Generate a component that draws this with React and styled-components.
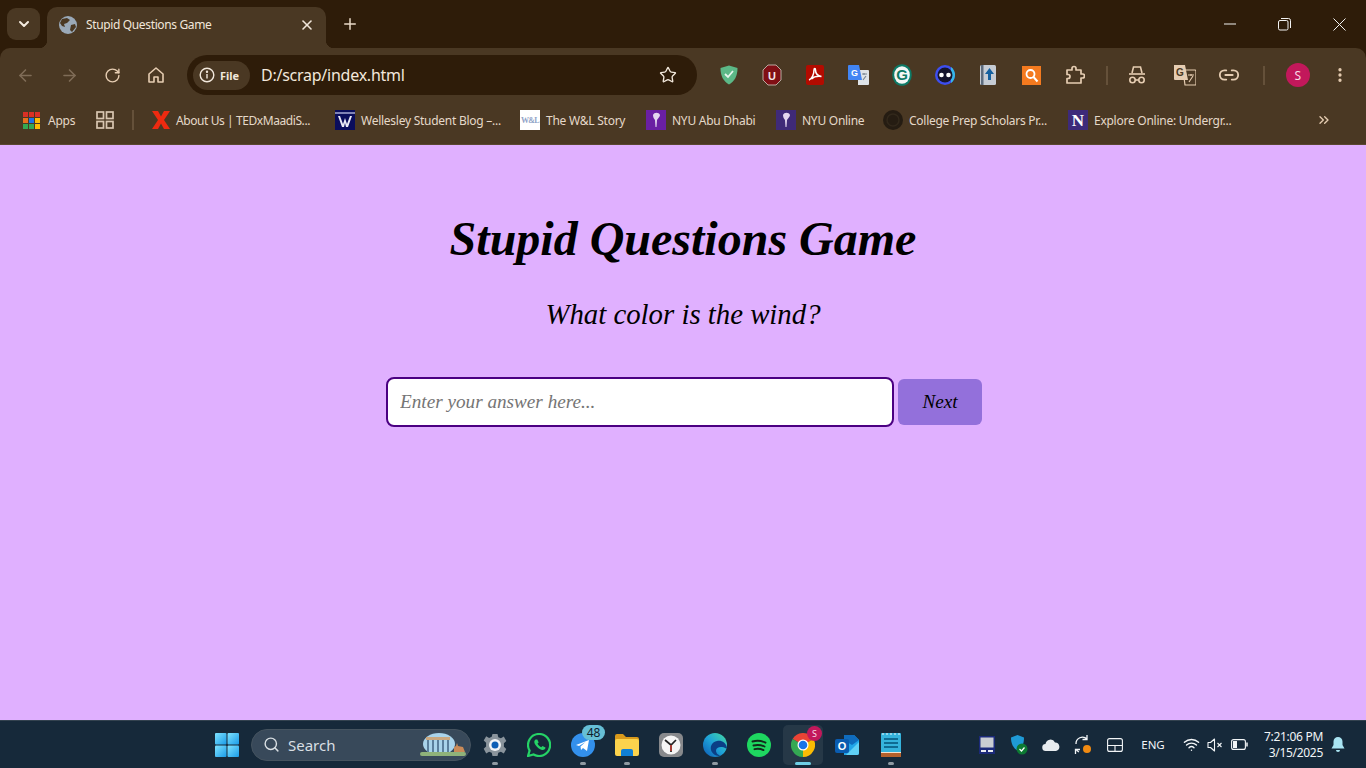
import React from "react"
import styled, { createGlobalStyle } from "styled-components"
import { ArrowLeft, ArrowRight, RotateCw, Star, Link2, MoreVertical, X, Plus, ChevronDown, ChevronsRight, Search, Wifi } from "lucide-react"

const GlobalStyle = createGlobalStyle`
    html, body {
        margin: 0;
        padding: 0;
        overflow: hidden;
    }
    * {
        box-sizing: border-box;
    }
`

const chromeFont = `"Noto Sans", "Open Sans", sans-serif`
const dark = "#2e1c09"
const frame = "#4a3823"
const tint = "#e6cdb2"

const Page = styled.div`
    width: 1366px;
    height: 768px;
    display: flex;
    flex-direction: column;
    background: ${dark};
    font-family: ${chromeFont};
`

/* tab strip */
const TabStrip = styled.div`
    height: 48px;
    flex: none;
    display: flex;
    align-items: flex-end;
    padding-left: 7px;
`
const TabSwitcher = styled.div`
    width: 33px;
    height: 32px;
    margin-bottom: 8px;
    background: ${frame};
    border-radius: 9px;
    color: #f4eadf;
    display: flex;
    align-items: center;
    justify-content: center;
`
const Tab = styled.div`
    position: relative;
    width: 279px;
    height: 41px;
    margin-left: 7px;
    padding: 0 11px 6px 12px;
    background: ${frame};
    border-radius: 10px 10px 0 0;
    display: flex;
    align-items: center;
    gap: 9px;
    color: #f1e6da;
    &::before,
    &::after {
        content: "";
        position: absolute;
        bottom: 0;
        width: 8px;
        height: 8px;
    }
    &::before {
        left: -8px;
        background: radial-gradient(circle at 0 0, transparent 8px, ${frame} 8.5px);
    }
    &::after {
        right: -8px;
        background: radial-gradient(circle at 100% 0, transparent 8px, ${frame} 8.5px);
    }
`
const TabTitle = styled.span`
    flex: 1;
    font-size: 12px;
    letter-spacing: -0.36px;
    white-space: nowrap;
`
const NewTab = styled.div`
    width: 24px;
    height: 24px;
    margin: 0 0 12px 12px;
    color: #e9d9c7;
    display: flex;
    align-items: center;
    justify-content: center;
`
const WindowControls = styled.div`
    margin-left: auto;
    margin-right: -1px;
    align-self: stretch;
    display: flex;
`
const WindowButton = styled.div`
    width: 55px;
    height: 48px;
    color: #f2f2f2;
    display: flex;
    align-items: center;
    justify-content: center;
`

/* toolbar */
const Toolbar = styled.div`
    height: 54px;
    flex: none;
    background: ${frame};
    border-radius: 10px 10px 0 0;
    display: flex;
    align-items: center;
    padding-left: 4px;
`
const NavButton = styled.div`
    width: 43.5px;
    height: 36px;
    flex: none;
    color: ${p => (p.$off ? "#7f6c57" : tint)};
    display: flex;
    align-items: center;
    justify-content: center;
`
const Omnibox = styled.div`
    width: 510px;
    height: 40px;
    margin-left: 9px;
    margin-right: 9px;
    padding: 0 20px 0 6px;
    flex: none;
    background: ${dark};
    border-radius: 20px;
    display: flex;
    align-items: center;
    color: #f2e8dc;
`
const SiteChip = styled.div`
    width: 57px;
    height: 29px;
    padding-left: 6px;
    background: ${frame};
    border-radius: 15px;
    display: flex;
    align-items: center;
    gap: 5px;
    font-size: 11px;
    font-weight: 700;
    color: #f2e8dc;
`
const Url = styled.span`
    flex: 1;
    margin-left: 11px;
    font-size: 16px;
    letter-spacing: -0.25px;
`
const ExtensionRow = styled.div`
    display: flex;
    align-items: center;
    padding-left: 1px;
`
const ExtensionSlot = styled.div`
    width: ${p => p.$w || 43.3}px;
    height: 36px;
    flex: none;
    color: ${tint};
    display: flex;
    align-items: center;
    justify-content: center;
`
const ToolbarRule = styled.div`
    width: 2px;
    height: 19px;
    flex: none;
    margin: 0 ${p => p.$gap || 13}px;
    background: #65513a;
`
const Avatar = styled.div`
    width: 24px;
    height: 24px;
    flex: none;
    margin-left: 3px;
    border-radius: 50%;
    background: #c2185b;
    color: #f8dbe6;
    font-size: 12px;
    display: flex;
    align-items: center;
    justify-content: center;
`

/* bookmarks */
const BookmarkBar = styled.div`
    height: 43px;
    flex: none;
    padding: 0 0 6px 23px;
    background: ${frame};
    border-bottom: 1px solid #5a4731;
    display: flex;
    align-items: center;
    color: #e5d8c9;
    font-size: 12px;
`
const Bookmark = styled.div`
    width: ${p => p.$w}px;
    flex: none;
    display: flex;
    align-items: center;
    gap: ${p => p.$gap || 6}px;
    white-space: nowrap;
`
const BookmarkText = styled.span`
    letter-spacing: ${p => p.$track || -0.26}px;
`
const BarRule = styled.div`
    width: 2px;
    height: 20px;
    flex: none;
    margin-right: 18px;
    background: #65513a;
`
const Overflow = styled.div`
    margin-left: auto;
    margin-right: 34px;
    color: ${tint};
    display: flex;
`

/* the page itself */
const Main = styled.main`
    flex: 1;
    background: #e0b0ff;
    color: #000;
    font-family: "Liberation Serif", "Times New Roman", serif;
    font-style: italic;
    display: flex;
    flex-direction: column;
    align-items: center;
    padding-top: 66px;
`
const Title = styled.h1`
    margin: 0;
    font-size: 48px;
    line-height: 55px;
    font-weight: 700;
`
const Question = styled.p`
    margin: 32px 0 0;
    font-size: 28.8px;
    line-height: 33px;
`
const AnswerForm = styled.form`
    margin: 46px 0 0 2px;
    display: flex;
    align-items: center;
    gap: 4px;
`
const AnswerInput = styled.input`
    width: 508px;
    height: 50px;
    padding: 0 12px;
    background: #fff;
    border: 2px solid #4b0082;
    border-radius: 8px;
    outline: none;
    font: italic 19.2px "Liberation Serif", "Times New Roman", serif;
    color: #000;
    &::placeholder {
        color: #757575;
        opacity: 1;
    }
`
const NextButton = styled.button`
    width: 84px;
    height: 46px;
    padding: 0;
    background: #9370db;
    border: none;
    border-radius: 6px;
    font: italic 19.2px "Liberation Serif", "Times New Roman", serif;
    color: #000;
`

/* taskbar */
const Taskbar = styled.footer`
    height: 48px;
    flex: none;
    padding-left: 205px;
    background: #16293a;
    border-top: 1px solid #33424f;
    display: flex;
    align-items: center;
    color: #f2f5f7;
`
const TaskButton = styled.div`
    position: relative;
    width: ${p => (p.$active ? 40 : 44)}px;
    height: 40px;
    flex: none;
    margin: 0 ${p => (p.$active ? 2 : 0)}px;
    border-radius: 5px;
    background: ${p => (p.$active ? "#263847" : "transparent")};
    display: flex;
    align-items: center;
    justify-content: center;
`
const RunDot = styled.span`
    position: absolute;
    left: 50%;
    bottom: 0;
    width: ${p => (p.$active ? 16 : 6)}px;
    height: 3px;
    margin-left: ${p => (p.$active ? -8 : -3)}px;
    border-radius: 2px;
    background: ${p => (p.$active ? "#6fcfe6" : "#8f9aa3")};
`
const CountBadge = styled.span`
    position: absolute;
    top: 0;
    right: 0;
    width: 23px;
    height: 15px;
    border-radius: 8px;
    background: #66bfd6;
    color: #10202c;
    font-size: 12px;
    line-height: 15px;
    text-align: center;
`
const ChromeBadge = styled.span`
    position: absolute;
    top: 1px;
    right: 1px;
    width: 15px;
    height: 15px;
    border-radius: 50%;
    background: #c2185b;
    color: #f8dbe6;
    font-size: 9px;
    line-height: 15px;
    text-align: center;
`
const SearchBox = styled.div`
    width: 220px;
    height: 32px;
    flex: none;
    margin: 0 2px 0 2px;
    padding: 0 3px 0 11px;
    background: #38495a;
    border: 1px solid #45535f;
    border-radius: 16px;
    display: flex;
    align-items: center;
    gap: 8px;
    font-size: 15px;
    color: #d9dfe3;
`
const SearchLabel = styled.span`
    flex: 1;
`
const Tray = styled.div`
    margin-left: auto;
    padding-right: 21px;
    display: flex;
    align-items: center;
`
const TraySlot = styled.div`
    width: ${p => p.$w || 32}px;
    flex: none;
    display: flex;
    align-items: center;
    justify-content: center;
    font-size: 11.5px;
`
const ClockText = styled.div`
    width: 68px;
    flex: none;
    margin-right: 8px;
    text-align: right;
    font-size: 12px;
    line-height: 16px;
    letter-spacing: -0.3px;
    white-space: nowrap;
`

function GlobeIcon() {
    return (
        <svg width="18" height="18" viewBox="0 0 18 18">
            <circle cx="9" cy="9" r="9" fill="#9aa9b8" />
            <path d="M3 3 8 2 11 4 8 7 5 8 6 11 3 10 1 7ZM12 9 16 8 17 11 13 16 11 14Z" fill="#4a3823" />
        </svg>
    )
}

function HomeIcon() {
    return (
        <svg width="18" height="18" viewBox="0 0 18 18" fill="none" stroke="#e6cdb2" strokeWidth="1.6">
            <path d="M2 8 9 2l7 6v8h-5v-5H7v5H2Z" strokeLinejoin="round" />
        </svg>
    )
}

function InfoIcon() {
    return (
        <svg width="16" height="16" viewBox="0 0 16 16" fill="none" stroke="#f2e8dc" strokeWidth="1.4">
            <circle cx="8" cy="8" r="6.8" />
            <path d="M8 7v4.5" />
            <circle cx="8" cy="4.8" r=".5" fill="#f2e8dc" />
        </svg>
    )
}

function ShieldExt() {
    return (
        <svg width="20" height="20" viewBox="0 0 20 20">
            <path d="M1.5 3 10 .5 18.5 3c0 8-3 13.500-8.500 16.500C4.500 16.500 1.500 11 1.500 3Z" fill="#5cb887" />
            <path d="m6 9 3 3 5-6" fill="none" stroke="#e6f5ec" strokeWidth="1.8" />
        </svg>
    )
}

function StopExt() {
    return (
        <svg width="20" height="22" viewBox="0 0 20 22">
            <path d="M6 1h8l5 5v10l-5 5H6l-5-5V6Z" fill="#800f14" stroke="#b9a9a0" strokeWidth="1" />
            <text x="10" y="15.500" textAnchor="middle" fontSize="11" fontWeight="700" fill="#f3e6e6" fontFamily="Liberation Sans">U</text>
        </svg>
    )
}

function PdfExt() {
    return (
        <svg width="18" height="20" viewBox="0 0 18 20">
            <rect width="18" height="20" rx="2" fill="#b30b00" />
            <path d="M3 15c3-1 5-6 5-10 0-2 1.500-2 1.500 0 0 4 3 6 6 6.500-4-.5-8 .5-10 2.500" fill="none" stroke="#fff" strokeWidth="1.500" />
        </svg>
    )
}

function TranslateExt() {
    return (
        <svg width="21" height="20" viewBox="0 0 21 20">
            <path d="M10 5h10a1 1 0 0 1 1 1v13a1 1 0 0 1-1 1H10Z" fill="#dfe3e8" />
            <path d="M14 9h5M16 8v2M15 15l3-4" stroke="#7b8794" strokeWidth="1.200" fill="none" />
            <path d="M1 0h10l3 15H1a1 1 0 0 1-1-1V1a1 1 0 0 1 1-1Z" fill="#4285f4" />
            <text x="6.500" y="11" textAnchor="middle" fontSize="9" fontWeight="700" fill="#fff" fontFamily="Liberation Sans">G</text>
        </svg>
    )
}

function GrammarExt() {
    return (
        <svg width="20" height="22" viewBox="0 0 20 22">
            <ellipse cx="10" cy="11" rx="9.800" ry="10.800" fill="#0d7a66" />
            <ellipse cx="10" cy="11" rx="7.800" ry="8.800" fill="#f3f7f6" />
            <text x="10" y="16" textAnchor="middle" fontSize="15" fontWeight="700" fill="#0d7a66" fontFamily="Liberation Sans">G</text>
        </svg>
    )
}

function EyesExt() {
    return (
        <svg width="20" height="20" viewBox="0 0 20 20">
            <circle cx="10" cy="10" r="10" fill="#3d4ef0" />
            <path d="M16 2a10 10 0 0 1 0 16Z" fill="#35b7e8" />
            <circle cx="10" cy="10" r="7.500" fill="#15152e" />
            <circle cx="6.500" cy="10" r="2.300" fill="#fff" />
            <circle cx="13.500" cy="10" r="2.300" fill="#fff" />
        </svg>
    )
}

function BookExt() {
    return (
        <svg width="16" height="20" viewBox="0 0 16 20">
            <rect width="16" height="20" rx="1.500" fill="#c6ccd4" />
            <rect x="1" width="2.500" height="20" fill="#5c6b7d" />
            <path d="M9.500 3 14 9h-3v6H8V9H5Z" fill="#14609f" />
        </svg>
    )
}

function SearchExt() {
    return (
        <svg width="19" height="19" viewBox="0 0 19 19">
            <rect width="19" height="19" fill="#f47a1f" />
            <circle cx="8.500" cy="8" r="4" fill="none" stroke="#fff" strokeWidth="1.800" />
            <path d="m11.500 11 4 4.500" stroke="#fff" strokeWidth="2" />
        </svg>
    )
}

function PuzzleIcon() {
    return (
        <svg width="20" height="20" viewBox="0 0 20 20" fill="none" stroke="#e6cdb2" strokeWidth="1.700" strokeLinejoin="round">
            <path d="M2 5h5V3.500a2 2 0 0 1 4 0V5h5v4h1.500a2 2 0 0 1 0 4H16v5H2v-4.500h1a2 2 0 0 0 0-4H2Z" />
        </svg>
    )
}

function IncognitoIcon() {
    return (
        <svg width="20" height="20" viewBox="0 0 20 20" fill="none" stroke="#e6cdb2" strokeWidth="1.600">
            <path d="M5 8 6.500 2h7L15 8" />
            <path d="M2 9h16" />
            <circle cx="5.500" cy="15" r="2.700" />
            <circle cx="14.500" cy="15" r="2.700" />
            <path d="M8.200 15h3.600" />
        </svg>
    )
}

function TranslateIcon() {
    return (
        <svg width="22" height="22" viewBox="0 0 22 22">
            <path d="M0 1h11l3 15H1a1 1 0 0 1-1-1Z" fill="#e6cdb2" />
            <path d="M9 6h12a1 1 0 0 1 1 1v14H11Z" fill="none" stroke="#e6cdb2" strokeWidth="1.200" />
            <text x="6" y="12" textAnchor="middle" fontSize="10" fontWeight="700" fill="#4a3823" fontFamily="Liberation Sans">G</text>
            <path d="M14 11h6M17 10v2M15 18l4-6" stroke="#e6cdb2" strokeWidth="1.100" fill="none" />
        </svg>
    )
}

function AppsIcon() {
    const colours = ["#d93025", "#d93025", "#d93025", "#e8711c", "#1a73e8", "#fbbc04", "#34a853", "#34a853", "#fbbc04"]
    return (
        <svg width="17" height="17" viewBox="0 0 17 17">
            {colours.map((fill, i) => (
                <rect key={i} x={(i % 3) * 6} y={Math.floor(i / 3) * 6} width="5" height="5" fill={fill} />
            ))}
        </svg>
    )
}

function GridIcon() {
    return (
        <svg width="18" height="18" viewBox="0 0 18 18" fill="none" stroke="#d9c6b1" strokeWidth="1.700">
            <rect x="1" y="1" width="6.500" height="6.500" />
            <rect x="10.500" y="1" width="6.500" height="6.500" />
            <rect x="1" y="10.500" width="6.500" height="6.500" />
            <rect x="10.500" y="10.500" width="6.500" height="6.500" />
        </svg>
    )
}

function TedxIcon() {
    return (
        <svg width="18" height="18" viewBox="0 0 18 18">
            <path d="M0 0h6l3 5.500L12 0h6l-6 9 6 9h-6l-3-5.500L6 18H0l6-9Z" fill="#ee2a10" />
        </svg>
    )
}

function WellesleyIcon() {
    return (
        <svg width="20" height="20" viewBox="0 0 20 20">
            <rect width="20" height="20" fill="#0a0d5c" />
            <rect y="2" width="20" height="2" fill="#7f82b5" />
            <path d="M3 6h2l3 8 2-6 2 6 3-8h2l-4 11h-2l-1-4-1 4H7Z" fill="#e9e9f4" />
        </svg>
    )
}

function WlIcon() {
    return (
        <svg width="20" height="20" viewBox="0 0 20 20">
            <rect width="20" height="20" fill="#fff" />
            <text x="10" y="13" textAnchor="middle" fontSize="8" fontWeight="700" fill="#8fa3c7" fontFamily="Liberation Serif" letterSpacing="-.6">W&amp;L</text>
        </svg>
    )
}

function TorchIcon({ bg }) {
    return (
        <svg width="20" height="20" viewBox="0 0 20 20">
            <rect width="20" height="20" fill={bg} />
            <path d="M7 5c1-3 6-3 7 0 0 2-2 3-3 5l-.5 7h-1L9 10C8 9 7 7 7 5Z" fill="#e4d6ef" />
        </svg>
    )
}

function SealIcon() {
    return (
        <svg width="20" height="20" viewBox="0 0 20 20">
            <circle cx="10" cy="10" r="10" fill="#251c12" />
            <circle cx="10" cy="10" r="6" fill="none" stroke="#32281b" strokeWidth="1.500" />
        </svg>
    )
}

function NorthwesternIcon() {
    return (
        <svg width="20" height="20" viewBox="0 0 20 20">
            <rect width="20" height="20" fill="#3d2a7a" />
            <text x="10" y="16" textAnchor="middle" fontSize="17" fontWeight="700" fill="#fff" fontFamily="Liberation Serif">N</text>
        </svg>
    )
}

function WindowsIcon() {
    return (
        <svg width="24" height="24" viewBox="0 0 24 24">
            <defs>
                <linearGradient id="winBlue" x1="0" y1="0" x2="1" y2="1">
                    <stop offset="0" stopColor="#7fe3ff" />
                    <stop offset="1" stopColor="#1a9be8" />
                </linearGradient>
            </defs>
            <rect x="0" y="0" width="11.500" height="11.500" rx="1" fill="url(#winBlue)" />
            <rect x="12.500" y="0" width="11.500" height="11.500" rx="1" fill="url(#winBlue)" />
            <rect x="0" y="12.500" width="11.500" height="11.500" rx="1" fill="url(#winBlue)" />
            <rect x="12.500" y="12.500" width="11.500" height="11.500" rx="1" fill="url(#winBlue)" />
        </svg>
    )
}

function RuinsThumb() {
    return (
        <svg width="48" height="26" viewBox="0 0 48 26">
            <ellipse cx="20" cy="12" rx="16" ry="11" fill="#a9d3ea" />
            <rect x="1" y="20" width="46" height="4" rx="2" fill="#8fb27a" />
            <path d="M7 5h24v3H7Z" fill="#c9a77f" />
            <path d="M8 8h2v12H8ZM13 8h2v12h-2ZM18 8h2v12h-2ZM23 8h2v12h-2ZM28 8h2v12h-2Z" fill="#5b7f9c" />
            <path d="M35 20v-5l2-1 1-3 1 3 5 1 2 5Z" fill="#c98a58" />
        </svg>
    )
}

function GearIcon() {
    return (
        <svg width="24" height="24" viewBox="0 0 24 24">
            <path d="M9.500 1h5l.8 3.200 2.600 1.100 2.900-1.700 2.500 4.300-2.400 2.300v3.600l2.400 2.300-2.500 4.300-2.900-1.700-2.600 1.100-.8 3.200h-5l-.8-3.200-2.600-1.100-2.900 1.700L.7 15.700l2.400-2.300v-3.600L.7 7.500l2.500-4.300 2.900 1.700 2.600-1.100Z" fill="#8a949c" />
            <circle cx="12" cy="12" r="6" fill="#f2f4f6" />
            <circle cx="12" cy="12" r="3.500" fill="#0f5fb5" />
        </svg>
    )
}

function WhatsappIcon() {
    return (
        <svg width="24" height="24" viewBox="0 0 24 24">
            <path d="M12 1a11 11 0 0 0-9.400 16.600L1 23l5.600-1.500A11 11 0 1 0 12 1Z" fill="none" stroke="#25d366" strokeWidth="2.200" />
            <path d="M8.500 6.500c-1.500 1-1.800 3 0 5.500s4 4.500 6.500 5c2 .3 3.500-1 3.500-2.500l-3-1.500-1.300 1.300c-1.500-.6-3-2-3.700-3.700l1.200-1.200-1.400-3Z" fill="#25d366" />
        </svg>
    )
}

function TelegramIcon() {
    return (
        <svg width="24" height="24" viewBox="0 0 24 24">
            <circle cx="12" cy="12" r="12" fill="#3390ec" />
            <path d="m5 12 13-5-2 11-4-3-2 2-.5-3.500 5-4.500-6.500 4Z" fill="#fff" />
        </svg>
    )
}

function FolderIcon() {
    return (
        <svg width="24" height="22" viewBox="0 0 24 22">
            <path d="M0 2a2 2 0 0 1 2-2h6l3 3h11a2 2 0 0 1 2 2v3H0Z" fill="#d99a1c" />
            <rect y="5" width="24" height="17" rx="2" fill="#fcd34d" />
            <path d="M8 15h8a2 2 0 0 1 2 2v5H6v-5a2 2 0 0 1 2-2Z" fill="#0f7fd6" />
        </svg>
    )
}

function ClockAppIcon() {
    return (
        <svg width="24" height="24" viewBox="0 0 24 24">
            <rect width="24" height="24" rx="5" fill="#87898c" />
            <circle cx="12" cy="12" r="9.500" fill="#f5f5f5" />
            <path d="M6 7l6 5 5-5M12 12v7" stroke="#222" strokeWidth="1.700" fill="none" />
            <path d="M12 12v6" stroke="#d13b2e" strokeWidth="1.400" />
        </svg>
    )
}

function EdgeIcon() {
    return (
        <svg width="24" height="24" viewBox="0 0 24 24">
            <defs>
                <linearGradient id="edgeSwirl" x1="1" y1="0" x2="0" y2="1">
                    <stop offset="0" stopColor="#45dba0" />
                    <stop offset=".5" stopColor="#1fa3d8" />
                    <stop offset="1" stopColor="#0c59b4" />
                </linearGradient>
            </defs>
            <circle cx="12" cy="12" r="12" fill="url(#edgeSwirl)" />
            <path d="M24 15c-1-6-6-8-10-7-5 1-7 5-6 9s6 7 10 5.500c-3 0-5-2.500-5-5s3-4 6-3.500 4 2 5 1Z" fill="#0b3f86" />
        </svg>
    )
}

function SpotifyIcon() {
    return (
        <svg width="24" height="24" viewBox="0 0 24 24">
            <circle cx="12" cy="12" r="12" fill="#1ed760" />
            <path d="M5.500 8.500c4.500-1.200 9-.8 13 1.200M6.500 12.500c3.800-1 7.500-.6 11 1M7.500 16.200c3-.8 6-.5 9 .9" stroke="#12291b" strokeWidth="1.900" fill="none" strokeLinecap="round" />
        </svg>
    )
}

function ChromeAppIcon() {
    return (
        <svg width="24" height="24" viewBox="0 0 24 24">
            <path d="M12 12 1.600 6A12 12 0 0 1 22.400 6Z" fill="#ea4335" />
            <path d="M12 12 22.400 6A12 12 0 0 1 12 24Z" fill="#fbbc04" />
            <path d="M12 12 12 24A12 12 0 0 1 1.600 6Z" fill="#34a853" />
            <circle cx="12" cy="12" r="5.500" fill="#fff" />
            <circle cx="12" cy="12" r="4.300" fill="#1a73e8" />
        </svg>
    )
}

function OutlookIcon() {
    return (
        <svg width="24" height="24" viewBox="0 0 24 24">
            <path d="M9 2h10l5 5v13a2 2 0 0 1-2 2H9Z" fill="#21a5e8" />
            <path d="M9 2h10l5 5-7 5-8-5Z" fill="#0f6cbd" />
            <path d="M24 9v11a2 2 0 0 1-2 2H11Z" fill="#5fd0f5" />
            <rect x="0" y="6" width="14" height="14" rx="2" fill="#0a5cb0" />
            <text x="7" y="17" textAnchor="middle" fontSize="11" fontWeight="700" fill="#fff" fontFamily="Liberation Sans">O</text>
        </svg>
    )
}

function NotepadIcon() {
    return (
        <svg width="20" height="24" viewBox="0 0 20 24">
            <rect width="20" height="24" rx="1" fill="#35b3dc" />
            <rect y="20" width="20" height="4" fill="#b5612c" />
            <rect y="19" width="20" height="1" fill="#f2e2d0" />
            <path d="M3 6h14M3 10h14M3 14h14" stroke="#0f6b92" strokeWidth="1.800" />
            <path d="M2 0v2M6 0v2M10 0v2M14 0v2M18 0v2" stroke="#e8f6fb" strokeWidth="1" />
        </svg>
    )
}

function TrayBoxIcon() {
    return (
        <svg width="16" height="18" viewBox="0 0 16 18">
            <rect width="16" height="18" fill="#1b2a7a" />
            <rect x="1.500" y="1.500" width="13" height="10" fill="#c9cdd2" />
            <path d="M2 14h5v2H2ZM9 14h5v2H9Z" fill="#e8ebef" />
        </svg>
    )
}

function DefenderIcon() {
    return (
        <svg width="18" height="20" viewBox="0 0 18 20">
            <path d="M1 2.500 7.500 0 14 2.500c0 6-1.500 10-6.500 13C3 13 1 8.500 1 2.500Z" fill="#1f9ad6" />
            <circle cx="12" cy="14" r="5.500" fill="#0d7a33" />
            <path d="m9.500 14 2 2 3-3.500" stroke="#fff" strokeWidth="1.200" fill="none" />
        </svg>
    )
}

function CloudIcon() {
    return (
        <svg width="18" height="14" viewBox="0 0 18 14">
            <path d="M4 13a3.500 3.500 0 0 1-.5-7A5 5 0 0 1 13 4.500 4.300 4.300 0 0 1 14 13Z" fill="#e8ecef" />
        </svg>
    )
}

function SyncIcon() {
    return (
        <svg width="18" height="20" viewBox="0 0 18 20" fill="none" stroke="#f2f5f7" strokeWidth="1.300">
            <path d="M2 9a6.500 6.500 0 0 1 11-5M13 0v4.500H8.500" />
            <path d="M2 14a6 6 0 0 0 3 3M1.500 19v-4.500H6" />
            <circle cx="13" cy="14" r="4" fill="#f08a12" stroke="none" />
        </svg>
    )
}

function TabletIcon() {
    return (
        <svg width="16" height="14" viewBox="0 0 16 14" fill="none" stroke="#f2f5f7" strokeWidth="1.100">
            <rect x=".6" y=".6" width="14.800" height="12.800" rx="2" />
            <path d="M.6 7.500h14.800M8 7.500v5.900" />
        </svg>
    )
}

function MuteIcon() {
    return (
        <svg width="16" height="14" viewBox="0 0 16 14" fill="none" stroke="#f2f5f7" strokeWidth="1.100">
            <path d="M1 4.500h2.500L7.500 1v12l-4-3.500H1Z" strokeLinejoin="round" />
            <path d="m10.500 5 4 4M14.500 5l-4 4" />
        </svg>
    )
}

function BatteryIcon() {
    return (
        <svg width="17" height="11" viewBox="0 0 17 11" fill="none" stroke="#f2f5f7" strokeWidth="1.100">
            <rect x=".6" y=".6" width="13.800" height="9.800" rx="2" />
            <rect x="2" y="2" width="4" height="7" fill="#f2f5f7" stroke="none" />
            <path d="M16 3.500v4" strokeWidth="1.500" />
        </svg>
    )
}

function BellIcon() {
    return (
        <svg width="14" height="15" viewBox="0 0 14 15">
            <path d="M7 0a4.500 4.500 0 0 0-4.500 4.500V8L.5 11.500h13L11.500 8V4.500A4.500 4.500 0 0 0 7 0Z" fill="#a9e4f2" />
            <path d="M5 13h4a2 2 0 0 1-4 0Z" fill="#a9e4f2" />
        </svg>
    )
}

const extensions = [ShieldExt, StopExt, PdfExt, TranslateExt, GrammarExt, EyesExt, BookExt, SearchExt, PuzzleIcon]

const bookmarks = [
    { Icon: WellesleyIcon, label: "Wellesley Student Blog –...", w: 185 },
    { Icon: WlIcon, label: "The W&L Story", w: 126 },
    { Icon: () => <TorchIcon bg="#6a1fa3" />, label: "NYU Abu Dhabi", w: 130 },
    { Icon: () => <TorchIcon bg="#3f2a78" />, label: "NYU Online", w: 107 },
    { Icon: SealIcon, label: "College Prep Scholars Pr...", w: 185 },
    { Icon: NorthwesternIcon, label: "Explore Online: Undergr...", w: 190 },
]

const taskApps = [
    { Icon: GearIcon, running: true },
    { Icon: WhatsappIcon },
    { Icon: TelegramIcon, running: true, count: 48 },
    { Icon: FolderIcon, running: true },
    { Icon: ClockAppIcon },
    { Icon: EdgeIcon, running: true },
    { Icon: SpotifyIcon },
    { Icon: ChromeAppIcon, active: true, avatar: true },
    { Icon: OutlookIcon },
    { Icon: NotepadIcon, running: true },
]

export default function App() {
    return (
        <Page>
            <GlobalStyle />
            <TabStrip>
                <TabSwitcher><ChevronDown size={16} strokeWidth={3} /></TabSwitcher>
                <Tab>
                    <GlobeIcon />
                    <TabTitle>Stupid Questions Game</TabTitle>
                    <X size={16} strokeWidth={2.4} />
                </Tab>
                <NewTab><Plus size={18} strokeWidth={2} /></NewTab>
                <WindowControls>
                    <WindowButton>
                        <svg width="12" height="2" viewBox="0 0 12 2" stroke="#f2f2f2">
                            <path d="M0 1h12" />
                        </svg>
                    </WindowButton>
                    <WindowButton>
                        <svg width="13" height="13" viewBox="0 0 13 13" fill="none" stroke="#f2f2f2">
                            <rect x=".5" y="2.500" width="9.500" height="9.500" rx="1.500" />
                            <path d="M3 .5h7.500a2 2 0 0 1 2 2V10" />
                        </svg>
                    </WindowButton>
                    <WindowButton>
                        <svg width="13" height="13" viewBox="0 0 13 13" stroke="#f2f2f2">
                            <path d="m.5.500 12 12M12.500.5l-12 12" />
                        </svg>
                    </WindowButton>
                </WindowControls>
            </TabStrip>

            <Toolbar>
                <NavButton $off><ArrowLeft size={19} /></NavButton>
                <NavButton $off><ArrowRight size={19} /></NavButton>
                <NavButton><RotateCw size={17} strokeWidth={2} /></NavButton>
                <NavButton><HomeIcon /></NavButton>
                <Omnibox>
                    <SiteChip><InfoIcon />File</SiteChip>
                    <Url>D:/scrap/index.html</Url>
                    <Star size={18} strokeWidth={1.8} />
                </Omnibox>
                <ExtensionRow>
                    {extensions.map((Ext, i) => (
                        <ExtensionSlot key={i}><Ext /></ExtensionSlot>
                    ))}
                    <ToolbarRule $gap={9} />
                    <ExtensionSlot $w={40}><IncognitoIcon /></ExtensionSlot>
                    <ExtensionSlot $w={56}><TranslateIcon /></ExtensionSlot>
                    <ExtensionSlot $w={32}><Link2 size={22} strokeWidth={2} /></ExtensionSlot>
                    <ToolbarRule $gap={18} />
                    <Avatar>S</Avatar>
                    <ExtensionSlot $w={60}><MoreVertical size={18} strokeWidth={2.4} /></ExtensionSlot>
                </ExtensionRow>
            </Toolbar>

            <BookmarkBar>
                <Bookmark $w={73} $gap={8}><AppsIcon /><BookmarkText>Apps</BookmarkText></Bookmark>
                <Bookmark $w={36}><GridIcon /></Bookmark>
                <BarRule />
                <Bookmark $w={183} $gap={6}><TedxIcon /><BookmarkText $track={-0.42}>About Us | TEDxMaadiS...</BookmarkText></Bookmark>
                {bookmarks.map(({ Icon, label, w }) => (
                    <Bookmark key={label} $w={w}><Icon /><BookmarkText>{label}</BookmarkText></Bookmark>
                ))}
                <Overflow><ChevronsRight size={16} /></Overflow>
            </BookmarkBar>

            <Main>
                <Title>Stupid Questions Game</Title>
                <Question>What color is the wind?</Question>
                <AnswerForm onSubmit={e => e.preventDefault()}>
                    <AnswerInput placeholder="Enter your answer here..." />
                    <NextButton>Next</NextButton>
                </AnswerForm>
            </Main>

            <Taskbar>
                <TaskButton><WindowsIcon /></TaskButton>
                <SearchBox>
                    <Search size={17} />
                    <SearchLabel>Search</SearchLabel>
                    <RuinsThumb />
                </SearchBox>
                {taskApps.map(({ Icon, running, active, count, avatar }, i) => (
                    <TaskButton key={i} $active={active}>
                        <Icon />
                        {count && <CountBadge>{count}</CountBadge>}
                        {avatar && <ChromeBadge>S</ChromeBadge>}
                        {(running || active) && <RunDot $active={active} />}
                    </TaskButton>
                ))}
                <Tray>
                    <TraySlot><TrayBoxIcon /></TraySlot>
                    <TraySlot><DefenderIcon /></TraySlot>
                    <TraySlot><CloudIcon /></TraySlot>
                    <TraySlot><SyncIcon /></TraySlot>
                    <TraySlot><TabletIcon /></TraySlot>
                    <TraySlot $w={44}>ENG</TraySlot>
                    <TraySlot $w={32}><Wifi size={17} /></TraySlot>
                    <TraySlot $w={16}><MuteIcon /></TraySlot>
                    <TraySlot $w={32}><BatteryIcon /></TraySlot>
                    <ClockText>7:21:06 PM<br />3/15/2025</ClockText>
                    <BellIcon />
                </Tray>
            </Taskbar>
        </Page>
    )
}
